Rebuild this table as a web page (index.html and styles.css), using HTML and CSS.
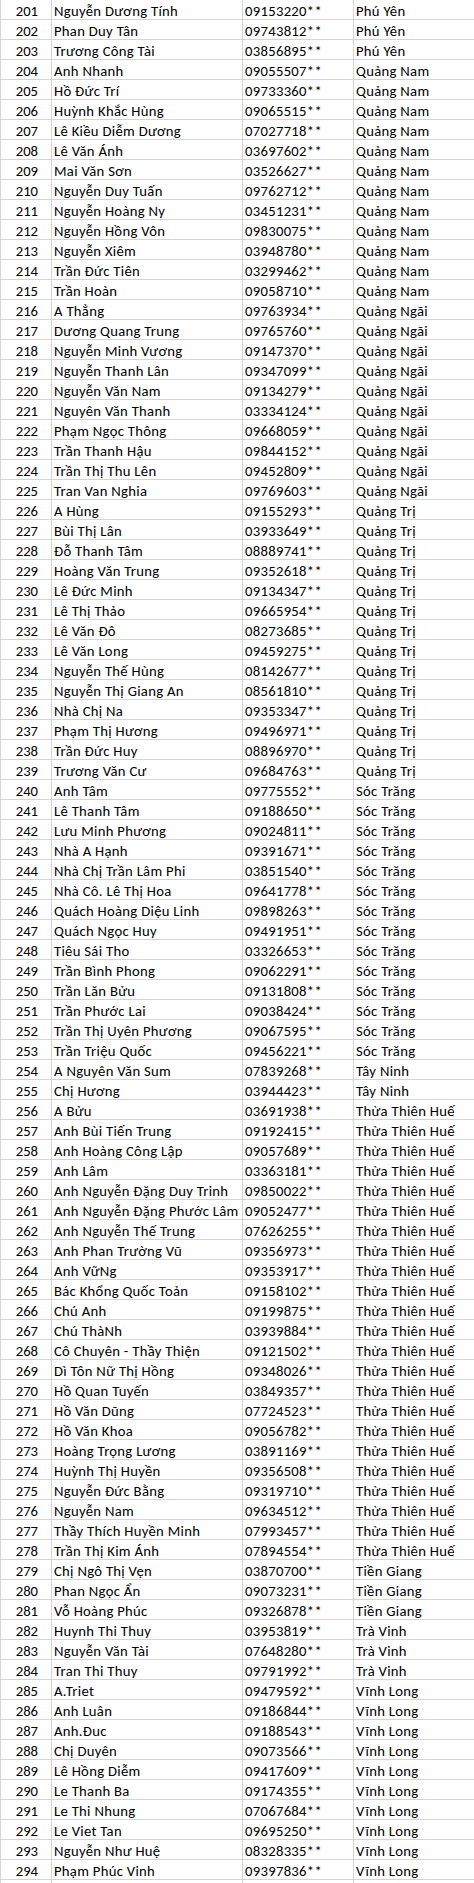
FILE: index.html
```html
<!DOCTYPE html>
<html lang="vi">
<head>
<meta charset="utf-8">
<title>Danh sách</title>
<link rel="stylesheet" href="styles.css">
</head>
<body>
<div class="sheet">
<div class="row"><div class="c num">201</div><div class="c">Nguyễn Dương Tính</div><div class="c">09153220**</div><div class="c last">Phú Yên</div></div>
<div class="row"><div class="c num">202</div><div class="c">Phan Duy Tân</div><div class="c">09743812**</div><div class="c last">Phú Yên</div></div>
<div class="row"><div class="c num">203</div><div class="c">Trương Công Tài</div><div class="c">03856895**</div><div class="c last">Phú Yên</div></div>
<div class="row"><div class="c num">204</div><div class="c">Anh Nhanh</div><div class="c">09055507**</div><div class="c last">Quảng Nam</div></div>
<div class="row"><div class="c num">205</div><div class="c">Hồ Đức Trí</div><div class="c">09733360**</div><div class="c last">Quảng Nam</div></div>
<div class="row"><div class="c num">206</div><div class="c">Huỳnh Khắc Hùng</div><div class="c">09065515**</div><div class="c last">Quảng Nam</div></div>
<div class="row"><div class="c num">207</div><div class="c">Lê Kiều Diễm Dương</div><div class="c">07027718**</div><div class="c last">Quảng Nam</div></div>
<div class="row"><div class="c num">208</div><div class="c">Lê Văn Ánh</div><div class="c">03697602**</div><div class="c last">Quảng Nam</div></div>
<div class="row"><div class="c num">209</div><div class="c">Mai Văn Sơn</div><div class="c">03526627**</div><div class="c last">Quảng Nam</div></div>
<div class="row"><div class="c num">210</div><div class="c">Nguyễn Duy Tuấn</div><div class="c">09762712**</div><div class="c last">Quảng Nam</div></div>
<div class="row"><div class="c num">211</div><div class="c">Nguyễn Hoàng Ny</div><div class="c">03451231**</div><div class="c last">Quảng Nam</div></div>
<div class="row"><div class="c num">212</div><div class="c">Nguyễn Hồng Vôn</div><div class="c">09830075**</div><div class="c last">Quảng Nam</div></div>
<div class="row"><div class="c num">213</div><div class="c">Nguyễn Xiêm</div><div class="c">03948780**</div><div class="c last">Quảng Nam</div></div>
<div class="row"><div class="c num">214</div><div class="c">Trần Đức Tiên</div><div class="c">03299462**</div><div class="c last">Quảng Nam</div></div>
<div class="row"><div class="c num">215</div><div class="c">Trần Hoàn</div><div class="c">09058710**</div><div class="c last">Quảng Nam</div></div>
<div class="row"><div class="c num">216</div><div class="c">A Thẳng</div><div class="c">09763934**</div><div class="c last">Quảng Ngãi</div></div>
<div class="row"><div class="c num">217</div><div class="c">Dương Quang Trung</div><div class="c">09765760**</div><div class="c last">Quảng Ngãi</div></div>
<div class="row"><div class="c num">218</div><div class="c">Nguyễn Minh Vương</div><div class="c">09147370**</div><div class="c last">Quảng Ngãi</div></div>
<div class="row"><div class="c num">219</div><div class="c">Nguyễn Thanh Lân</div><div class="c">09347099**</div><div class="c last">Quảng Ngãi</div></div>
<div class="row"><div class="c num">220</div><div class="c">Nguyễn Văn Nam</div><div class="c">09134279**</div><div class="c last">Quảng Ngãi</div></div>
<div class="row"><div class="c num">221</div><div class="c">Nguyên Văn Thanh</div><div class="c">03334124**</div><div class="c last">Quảng Ngãi</div></div>
<div class="row"><div class="c num">222</div><div class="c">Phạm Ngọc Thông</div><div class="c">09668059**</div><div class="c last">Quảng Ngãi</div></div>
<div class="row"><div class="c num">223</div><div class="c">Trần Thanh Hậu</div><div class="c">09844152**</div><div class="c last">Quảng Ngãi</div></div>
<div class="row"><div class="c num">224</div><div class="c">Trần Thị Thu Lên</div><div class="c">09452809**</div><div class="c last">Quảng Ngãi</div></div>
<div class="row"><div class="c num">225</div><div class="c">Tran Van Nghia</div><div class="c">09769603**</div><div class="c last">Quảng Ngãi</div></div>
<div class="row"><div class="c num">226</div><div class="c">A Hùng</div><div class="c">09155293**</div><div class="c last">Quảng Trị</div></div>
<div class="row"><div class="c num">227</div><div class="c">Bùi Thị Lân</div><div class="c">03933649**</div><div class="c last">Quảng Trị</div></div>
<div class="row"><div class="c num">228</div><div class="c">Đỗ Thanh Tâm</div><div class="c">08889741**</div><div class="c last">Quảng Trị</div></div>
<div class="row"><div class="c num">229</div><div class="c">Hoàng Văn Trung</div><div class="c">09352618**</div><div class="c last">Quảng Trị</div></div>
<div class="row"><div class="c num">230</div><div class="c">Lê Đức Minh</div><div class="c">09134347**</div><div class="c last">Quảng Trị</div></div>
<div class="row"><div class="c num">231</div><div class="c">Lê Thị Thảo</div><div class="c">09665954**</div><div class="c last">Quảng Trị</div></div>
<div class="row"><div class="c num">232</div><div class="c">Lê Văn Đô</div><div class="c">08273685**</div><div class="c last">Quảng Trị</div></div>
<div class="row"><div class="c num">233</div><div class="c">Lê Văn Long</div><div class="c">09459275**</div><div class="c last">Quảng Trị</div></div>
<div class="row"><div class="c num">234</div><div class="c">Nguyễn Thế Hùng</div><div class="c">08142677**</div><div class="c last">Quảng Trị</div></div>
<div class="row"><div class="c num">235</div><div class="c">Nguyễn Thị Giang An</div><div class="c">08561810**</div><div class="c last">Quảng Trị</div></div>
<div class="row"><div class="c num">236</div><div class="c">Nhà Chị Na</div><div class="c">09353347**</div><div class="c last">Quảng Trị</div></div>
<div class="row"><div class="c num">237</div><div class="c">Phạm Thị Hương</div><div class="c">09496971**</div><div class="c last">Quảng Trị</div></div>
<div class="row"><div class="c num">238</div><div class="c">Trần Đức Huy</div><div class="c">08896970**</div><div class="c last">Quảng Trị</div></div>
<div class="row"><div class="c num">239</div><div class="c">Trương Văn Cư</div><div class="c">09684763**</div><div class="c last">Quảng Trị</div></div>
<div class="row"><div class="c num">240</div><div class="c">Anh Tâm</div><div class="c">09775552**</div><div class="c last">Sóc Trăng</div></div>
<div class="row"><div class="c num">241</div><div class="c">Lê Thanh Tâm</div><div class="c">09188650**</div><div class="c last">Sóc Trăng</div></div>
<div class="row"><div class="c num">242</div><div class="c">Lưu Minh Phương</div><div class="c">09024811**</div><div class="c last">Sóc Trăng</div></div>
<div class="row"><div class="c num">243</div><div class="c">Nhà A Hạnh</div><div class="c">09391671**</div><div class="c last">Sóc Trăng</div></div>
<div class="row"><div class="c num">244</div><div class="c">Nhà Chị Trần Lâm Phi</div><div class="c">03851540**</div><div class="c last">Sóc Trăng</div></div>
<div class="row"><div class="c num">245</div><div class="c">Nhà Cô. Lê Thị Hoa</div><div class="c">09641778**</div><div class="c last">Sóc Trăng</div></div>
<div class="row"><div class="c num">246</div><div class="c">Quách Hoàng Diệu Linh</div><div class="c">09898263**</div><div class="c last">Sóc Trăng</div></div>
<div class="row"><div class="c num">247</div><div class="c">Quách Ngọc Huy</div><div class="c">09491951**</div><div class="c last">Sóc Trăng</div></div>
<div class="row"><div class="c num">248</div><div class="c">Tiêu Sái Tho</div><div class="c">03326653**</div><div class="c last">Sóc Trăng</div></div>
<div class="row"><div class="c num">249</div><div class="c">Trần Bình Phong</div><div class="c">09062291**</div><div class="c last">Sóc Trăng</div></div>
<div class="row"><div class="c num">250</div><div class="c">Trần Lăn Bửu</div><div class="c">09131808**</div><div class="c last">Sóc Trăng</div></div>
<div class="row"><div class="c num">251</div><div class="c">Trần Phước Lai</div><div class="c">09038424**</div><div class="c last">Sóc Trăng</div></div>
<div class="row"><div class="c num">252</div><div class="c">Trần Thị Uyên Phương</div><div class="c">09067595**</div><div class="c last">Sóc Trăng</div></div>
<div class="row"><div class="c num">253</div><div class="c">Trần Triệu Quốc</div><div class="c">09456221**</div><div class="c last">Sóc Trăng</div></div>
<div class="row"><div class="c num">254</div><div class="c">A Nguyên Văn Sum</div><div class="c">07839268**</div><div class="c last">Tây Ninh</div></div>
<div class="row"><div class="c num">255</div><div class="c">Chị Hương</div><div class="c">03944423**</div><div class="c last">Tây Ninh</div></div>
<div class="row"><div class="c num">256</div><div class="c">A Bửu</div><div class="c">03691938**</div><div class="c last">Thừa Thiên Huế</div></div>
<div class="row"><div class="c num">257</div><div class="c">Anh Bùi Tiến Trung</div><div class="c">09192415**</div><div class="c last">Thừa Thiên Huế</div></div>
<div class="row"><div class="c num">258</div><div class="c">Anh Hoàng Công Lập</div><div class="c">09057689**</div><div class="c last">Thừa Thiên Huế</div></div>
<div class="row"><div class="c num">259</div><div class="c">Anh Lâm</div><div class="c">03363181**</div><div class="c last">Thừa Thiên Huế</div></div>
<div class="row"><div class="c num">260</div><div class="c">Anh Nguyễn Đặng Duy Trinh</div><div class="c">09850022**</div><div class="c last">Thừa Thiên Huế</div></div>
<div class="row"><div class="c num">261</div><div class="c">Anh Nguyễn Đặng Phước Lâm</div><div class="c">09052477**</div><div class="c last">Thừa Thiên Huế</div></div>
<div class="row"><div class="c num">262</div><div class="c">Anh Nguyễn Thế Trung</div><div class="c">07626255**</div><div class="c last">Thừa Thiên Huế</div></div>
<div class="row"><div class="c num">263</div><div class="c">Anh Phan Trường Vũ</div><div class="c">09356973**</div><div class="c last">Thừa Thiên Huế</div></div>
<div class="row"><div class="c num">264</div><div class="c">Anh VữNg</div><div class="c">09353917**</div><div class="c last">Thừa Thiên Huế</div></div>
<div class="row"><div class="c num">265</div><div class="c">Bác Khổng Quốc Toản</div><div class="c">09158102**</div><div class="c last">Thừa Thiên Huế</div></div>
<div class="row"><div class="c num">266</div><div class="c">Chú Anh</div><div class="c">09199875**</div><div class="c last">Thừa Thiên Huế</div></div>
<div class="row"><div class="c num">267</div><div class="c">Chú ThàNh</div><div class="c">03939884**</div><div class="c last">Thừa Thiên Huế</div></div>
<div class="row"><div class="c num">268</div><div class="c">Cô Chuyên - Thầy Thiện</div><div class="c">09121502**</div><div class="c last">Thừa Thiên Huế</div></div>
<div class="row"><div class="c num">269</div><div class="c">Dì Tôn Nữ Thị Hồng</div><div class="c">09348026**</div><div class="c last">Thừa Thiên Huế</div></div>
<div class="row"><div class="c num">270</div><div class="c">Hồ Quan Tuyến</div><div class="c">03849357**</div><div class="c last">Thừa Thiên Huế</div></div>
<div class="row"><div class="c num">271</div><div class="c">Hồ Văn Dũng</div><div class="c">07724523**</div><div class="c last">Thừa Thiên Huế</div></div>
<div class="row"><div class="c num">272</div><div class="c">Hồ Văn Khoa</div><div class="c">09056782**</div><div class="c last">Thừa Thiên Huế</div></div>
<div class="row"><div class="c num">273</div><div class="c">Hoàng Trọng Lương</div><div class="c">03891169**</div><div class="c last">Thừa Thiên Huế</div></div>
<div class="row"><div class="c num">274</div><div class="c">Huỳnh Thị Huyền</div><div class="c">09356508**</div><div class="c last">Thừa Thiên Huế</div></div>
<div class="row"><div class="c num">275</div><div class="c">Nguyễn Đức Bằng</div><div class="c">09319710**</div><div class="c last">Thừa Thiên Huế</div></div>
<div class="row"><div class="c num">276</div><div class="c">Nguyễn Nam</div><div class="c">09634512**</div><div class="c last">Thừa Thiên Huế</div></div>
<div class="row"><div class="c num">277</div><div class="c">Thầy Thích Huyền Minh</div><div class="c">07993457**</div><div class="c last">Thừa Thiên Huế</div></div>
<div class="row"><div class="c num">278</div><div class="c">Trần Thị Kim Ánh</div><div class="c">07894554**</div><div class="c last">Thừa Thiên Huế</div></div>
<div class="row"><div class="c num">279</div><div class="c">Chị Ngô Thị Vẹn</div><div class="c">03870700**</div><div class="c last">Tiền Giang</div></div>
<div class="row"><div class="c num">280</div><div class="c">Phan Ngọc Ẩn</div><div class="c">09073231**</div><div class="c last">Tiền Giang</div></div>
<div class="row"><div class="c num">281</div><div class="c">Vỗ Hoàng Phúc</div><div class="c">09326878**</div><div class="c last">Tiền Giang</div></div>
<div class="row"><div class="c num">282</div><div class="c">Huynh Thi Thuy</div><div class="c">03953819**</div><div class="c last">Trà Vinh</div></div>
<div class="row"><div class="c num">283</div><div class="c">Nguyễn Văn Tài</div><div class="c">07648280**</div><div class="c last">Trà Vinh</div></div>
<div class="row"><div class="c num">284</div><div class="c">Tran Thi Thuy</div><div class="c">09791992**</div><div class="c last">Trà Vinh</div></div>
<div class="row"><div class="c num">285</div><div class="c">A.Triet</div><div class="c">09479592**</div><div class="c last">Vĩnh Long</div></div>
<div class="row"><div class="c num">286</div><div class="c">Anh Luân</div><div class="c">09186844**</div><div class="c last">Vĩnh Long</div></div>
<div class="row"><div class="c num">287</div><div class="c">Anh.Đuc</div><div class="c">09188543**</div><div class="c last">Vĩnh Long</div></div>
<div class="row"><div class="c num">288</div><div class="c">Chị Duyên</div><div class="c">09073566**</div><div class="c last">Vĩnh Long</div></div>
<div class="row"><div class="c num">289</div><div class="c">Lê Hồng Diễm</div><div class="c">09417609**</div><div class="c last">Vĩnh Long</div></div>
<div class="row"><div class="c num">290</div><div class="c">Le Thanh Ba</div><div class="c">09174355**</div><div class="c last">Vĩnh Long</div></div>
<div class="row"><div class="c num">291</div><div class="c">Le Thi Nhung</div><div class="c">07067684**</div><div class="c last">Vĩnh Long</div></div>
<div class="row"><div class="c num">292</div><div class="c">Le Viet Tan</div><div class="c">09695250**</div><div class="c last">Vĩnh Long</div></div>
<div class="row"><div class="c num">293</div><div class="c">Nguyễn Như Huệ</div><div class="c">08328335**</div><div class="c last">Vĩnh Long</div></div>
<div class="row"><div class="c num">294</div><div class="c">Phạm Phúc Vinh</div><div class="c">09397836**</div><div class="c last">Vĩnh Long</div></div>
<div class="row"><div class="c num"></div><div class="c"></div><div class="c"></div><div class="c last"></div></div>
</div>
</body>
</html>
```

FILE: styles.css
```css
html, body {
  margin: 0;
  padding: 0;
  background: #ffffff;
}

.sheet {
  font-family: Calibri, Carlito, "Liberation Sans", Arial, sans-serif;
  font-size: 14.67px;
  letter-spacing: 0.3px;
  color: #000000;
  overflow: hidden;
}

.row {
  display: grid;
  grid-template-columns: 52px 191px 111px 1fr;
  height: 20px;
}

.c {
  box-sizing: border-box;
  height: 20px;
  padding: 4px 2px 0 2px;
  line-height: 15px;
  white-space: nowrap;
  border-right: 1px solid #d4d4d4;
  border-bottom: 1px solid #d4d4d4;
}

.num {
  border-left: 1px solid #d4d4d4;
  text-align: right;
  padding-right: 13px;
  letter-spacing: 0;
}

.last {
  border-right: none;
}
```
